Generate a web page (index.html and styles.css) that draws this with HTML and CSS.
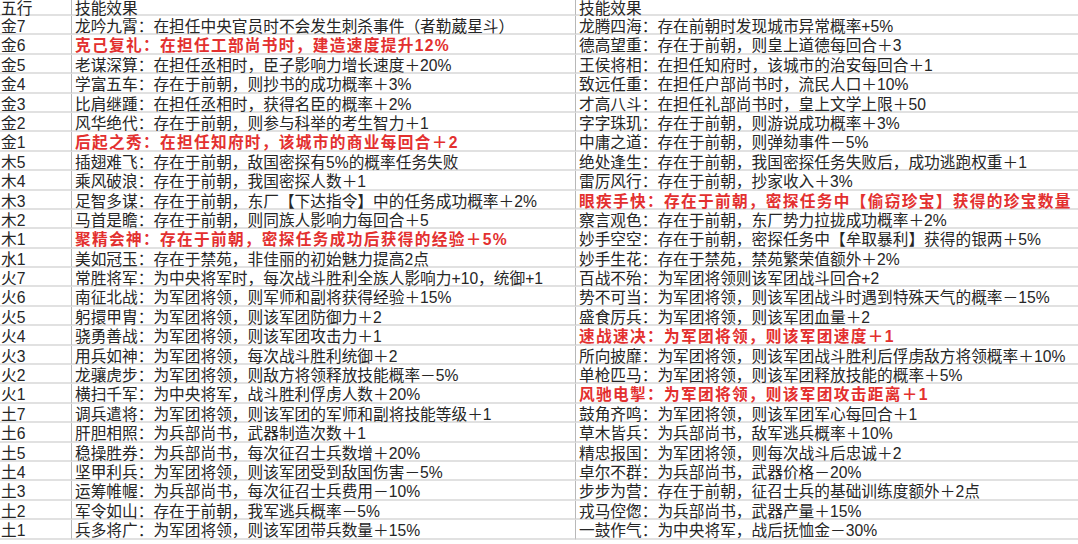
FILE: index.html
```html
<!DOCTYPE html>
<html lang="zh-CN">
<head>
<meta charset="utf-8">
<title>技能效果</title>
<link rel="stylesheet" href="styles.css">
</head>
<body>
<div class="sheet">
  <div class="cell head">五行</div><div class="cell head">技能效果</div><div class="cell head">技能效果</div>

  <div class="cell">金7</div><div class="cell">龙吟九霄：在担任中央官员时不会发生刺杀事件（者勒葳星斗）</div><div class="cell">龙腾四海：存在前朝时发现城市异常概率+5%</div>
  <div class="cell">金6</div><div class="cell red">克己复礼：在担任工部尚书时，建造速度提升12%</div><div class="cell">德高望重：存在于前朝，则皇上道德每回合＋3</div>
  <div class="cell">金5</div><div class="cell">老谋深算：在担任丞相时，臣子影响力增长速度＋20%</div><div class="cell">王侯将相：在担任知府时，该城市的治安每回合＋1</div>
  <div class="cell">金4</div><div class="cell">学富五车：存在于前朝，则抄书的成功概率＋3%</div><div class="cell">致远任重：在担任户部尚书时，流民人口＋10%</div>
  <div class="cell">金3</div><div class="cell">比肩继踵：在担任丞相时，获得名臣的概率＋2%</div><div class="cell">才高八斗：在担任礼部尚书时，皇上文学上限＋50</div>
  <div class="cell">金2</div><div class="cell">风华绝代：存在于前朝，则参与科举的考生智力＋1</div><div class="cell">字字珠玑：存在于前朝，则游说成功概率＋3%</div>
  <div class="cell">金1</div><div class="cell red">后起之秀：在担任知府时，该城市的商业每回合＋2</div><div class="cell">中庸之道：存在于前朝，则弹劾事件－5%</div>
  <div class="cell">木5</div><div class="cell">插翅难飞：存在于前朝，敌国密探有5%的概率任务失败</div><div class="cell">绝处逢生：存在于前朝，我国密探任务失败后，成功逃跑权重＋1</div>
  <div class="cell">木4</div><div class="cell">乘风破浪：存在于前朝，我国密探人数＋1</div><div class="cell">雷厉风行：存在于前朝，抄家收入＋3%</div>
  <div class="cell">木3</div><div class="cell">足智多谋：存在于前朝，东厂【下达指令】中的任务成功概率＋2%</div><div class="cell red">眼疾手快：存在于前朝，密探任务中【偷窃珍宝】获得的珍宝数量</div>
  <div class="cell">木2</div><div class="cell">马首是瞻：存在于前朝，则同族人影响力每回合＋5</div><div class="cell">察言观色：存在于前朝，东厂势力拉拢成功概率＋2%</div>
  <div class="cell">木1</div><div class="cell red">聚精会神：存在于前朝，密探任务成功后获得的经验＋5%</div><div class="cell">妙手空空：存在于前朝，密探任务中【牟取暴利】获得的银两＋5%</div>
  <div class="cell">水1</div><div class="cell">美如冠玉：存在于禁苑，非佳丽的初始魅力提高2点</div><div class="cell">妙手生花：存在于禁苑，禁苑繁荣值额外＋2%</div>
  <div class="cell">火7</div><div class="cell">常胜将军：为中央将军时，每次战斗胜利全族人影响力+10，统御+1</div><div class="cell">百战不殆：为军团将领则该军团战斗回合+2</div>
  <div class="cell">火6</div><div class="cell">南征北战：为军团将领，则军师和副将获得经验＋15%</div><div class="cell">势不可当：为军团将领，则该军团战斗时遇到特殊天气的概率－15%</div>
  <div class="cell">火5</div><div class="cell">躬擐甲胄：为军团将领，则该军团防御力＋2</div><div class="cell">盛食厉兵：为军团将领，则该军团血量＋2</div>
  <div class="cell">火4</div><div class="cell">骁勇善战：为军团将领，则该军团攻击力＋1</div><div class="cell red">速战速决：为军团将领，则该军团速度＋1</div>
  <div class="cell">火3</div><div class="cell">用兵如神：为军团将领，每次战斗胜利统御＋2</div><div class="cell">所向披靡：为军团将领，则该军团战斗胜利后俘虏敌方将领概率＋10%</div>
  <div class="cell">火2</div><div class="cell">龙骧虎步：为军团将领，则敌方将领释放技能概率－5%</div><div class="cell">单枪匹马：为军团将领，则该军团释放技能的概率＋5%</div>
  <div class="cell">火1</div><div class="cell">横扫千军：为中央将军，战斗胜利俘虏人数＋20%</div><div class="cell red">风驰电掣：为军团将领，则该军团攻击距离＋1</div>
  <div class="cell">土7</div><div class="cell">调兵遣将：为军团将领，则该军团的军师和副将技能等级＋1</div><div class="cell">鼓角齐鸣：为军团将领，则该军团军心每回合＋1</div>
  <div class="cell">土6</div><div class="cell">肝胆相照：为兵部尚书，武器制造次数＋1</div><div class="cell">草木皆兵：为兵部尚书，敌军逃兵概率＋10%</div>
  <div class="cell">土5</div><div class="cell">稳操胜券：为兵部尚书，每次征召士兵数增＋20%</div><div class="cell">精忠报国：为军团将领，则每次战斗后忠诚＋2</div>
  <div class="cell">土4</div><div class="cell">坚甲利兵：为军团将领，则该军团受到敌国伤害－5%</div><div class="cell">卓尔不群：为兵部尚书，武器价格－20%</div>
  <div class="cell">土3</div><div class="cell">运筹帷幄：为兵部尚书，每次征召士兵费用－10%</div><div class="cell">步步为营：存在于前朝，征召士兵的基础训练度额外＋2点</div>
  <div class="cell">土2</div><div class="cell">军令如山：存在于前朝，我军逃兵概率－5%</div><div class="cell">戎马倥偬：为兵部尚书，武器产量＋15%</div>
  <div class="cell">土1</div><div class="cell">兵多将广：为军团将领，则该军团带兵数量＋15%</div><div class="cell">一鼓作气：为中央将军，战后抚恤金－30%</div>
</div>
</body>
</html>
```

FILE: styles.css
```css
html, body {
  margin: 0;
  padding: 0;
  background: #ffffff;
  overflow: hidden;
}

.sheet {
  display: grid;
  grid-template-columns: 72px 504px 502px;
  grid-template-rows: 16px;
  grid-auto-rows: 19.4px;
  width: 1078px;
  font-family: "Liberation Sans", "Noto Sans CJK SC", sans-serif;
  font-size: 15.7px;
  color: #262626;
}

.cell {
  box-sizing: border-box;
  border-bottom: 2px solid #e1e1e1;
  border-right: 1px solid #b8b8b8;
  padding-top: 2px;
  padding-left: 3px;
  white-space: nowrap;
  line-height: 17px;
}

.cell:nth-child(3n) {
  border-right: none;
}

.cell:nth-child(3n+1) {
  padding-left: 1px;
}

.head {
  padding-top: 0;
  line-height: 17.5px;
}

.red {
  color: #e3302f;
  font-weight: bold;
  letter-spacing: 1.3px;
}
```
